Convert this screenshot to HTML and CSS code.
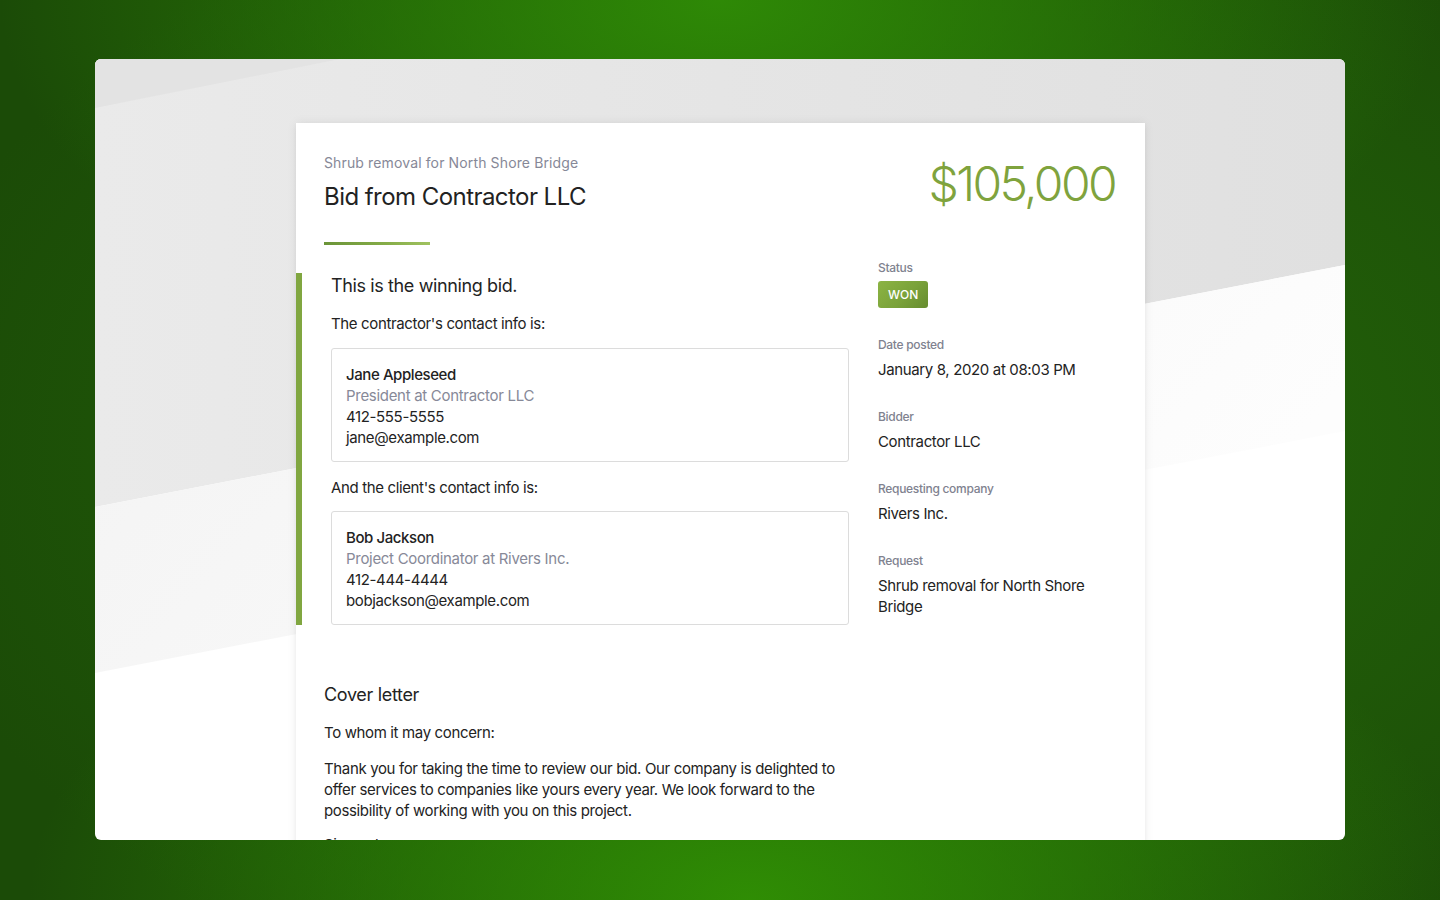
FILE: index.html
```html
<!DOCTYPE html>
<html lang="en">
<head>
<meta charset="utf-8">
<title>Bid from Contractor LLC</title>
<link rel="stylesheet" href="styles.css">
</head>
<body>
<div class="screen">
  <svg class="screen-bg" viewBox="0 0 1250 781" preserveAspectRatio="none" aria-hidden="true">
    <defs>
      <linearGradient id="bandA" x1="0" y1="0" x2="1" y2="0">
        <stop offset="0" stop-color="#eaeaea"/>
        <stop offset="1" stop-color="#e0e0e0"/>
      </linearGradient>
      <linearGradient id="bandB" x1="0" y1="0" x2="1" y2="0.3">
        <stop offset="0" stop-color="#f3f3f3"/>
        <stop offset="1" stop-color="#fdfdfd"/>
      </linearGradient>
    </defs>
    <rect x="0" y="0" width="1250" height="781" fill="#ffffff"/>
    <polygon points="0,0 1250,0 1250,206 0,448" fill="url(#bandA)"/>
    <polygon points="0,0 245,0 0,49" fill="#e3e3e3"/>
    <polygon points="0,448 1250,206 1250,372 0,614" fill="url(#bandB)"/>
  </svg>

  <main class="card">
    <header class="card-header">
      <div class="heading">
        <p class="subtitle">Shrub removal for North Shore Bridge</p>
        <h1 class="title">Bid from Contractor LLC</h1>
        <div class="accent-line"></div>
      </div>
      <div class="price">$105,000</div>
    </header>

    <div class="card-body">
      <section class="main-col">
        <div class="winner">
          <p class="winner-title">This is the winning bid.</p>
          <p class="para">The contractor's contact info is:</p>
          <div class="contact">
            <div class="contact-name">Jane Appleseed</div>
            <div class="contact-role">President at Contractor LLC</div>
            <div>412-555-5555</div>
            <div>jane@example.com</div>
          </div>
          <p class="para">And the client's contact info is:</p>
          <div class="contact last">
            <div class="contact-name">Bob Jackson</div>
            <div class="contact-role">Project Coordinator at Rivers Inc.</div>
            <div>412-444-4444</div>
            <div>bobjackson@example.com</div>
          </div>
        </div>

        <h2 class="section-title">Cover letter</h2>
        <p class="para">To whom it may concern:</p>
        <p class="para letter">Thank you for taking the time to review our bid. Our company is delighted to offer services to companies like yours every year. We look forward to the possibility of working with you on this project.</p>
        <p class="para">Sincerely,</p>
        <p class="para">Contractor LLC</p>
      </section>

      <aside class="side-col">
        <div class="field">
          <div class="label">Status</div>
          <span class="badge">WON</span>
        </div>
        <div class="field">
          <div class="label">Date posted</div>
          <div class="value">January 8, 2020 at 08:03 PM</div>
        </div>
        <div class="field">
          <div class="label">Bidder</div>
          <div class="value">Contractor LLC</div>
        </div>
        <div class="field">
          <div class="label">Requesting company</div>
          <div class="value">Rivers Inc.</div>
        </div>
        <div class="field">
          <div class="label">Request</div>
          <div class="value">Shrub removal for North Shore Bridge</div>
        </div>
      </aside>
    </div>
  </main>
</div>
</body>
</html>
```

FILE: styles.css
```css
* { box-sizing: border-box; }

html, body { height: 100%; }

body {
  margin: 0;
  padding: 59px 95px 0;
  overflow: hidden;
  font-family: Inter, "Noto Sans", "Liberation Sans", sans-serif;
  color: #232323;
  background:
    radial-gradient(ellipse 50% 42% at 50% 0%, rgba(47, 140, 6, 0.95), rgba(47, 140, 6, 0) 100%),
    radial-gradient(ellipse 50% 42% at 52% 100%, rgba(48, 144, 4, 0.95), rgba(48, 144, 4, 0) 100%),
    radial-gradient(ellipse 70% 70% at 62% 50%, #25690a, #1b4b07 100%);
  background-color: #1f5806;
}

.screen {
  position: relative;
  width: 1250px;
  height: 781px;
  border-radius: 6px;
  overflow: hidden;
  padding-top: 64px;
}

.screen-bg {
  position: absolute;
  left: 0;
  top: 0;
  width: 100%;
  height: 100%;
  display: block;
}

.card {
  position: relative;
  width: 849px;
  min-height: 760px;
  margin-left: 201px;
  background: #ffffff;
  box-shadow: 0 0 10px rgba(0, 0, 0, 0.07), 0 2px 4px rgba(0, 0, 0, 0.04);
  padding: 29px 30px 40px 28px;
  letter-spacing: -0.36px;
}

.card-header {
  display: flex;
  justify-content: space-between;
  align-items: flex-start;
}

.subtitle {
  margin: 0;
  padding-top: 1px;
  font-size: 14px;
  line-height: 20px;
  letter-spacing: 0.13px;
  color: #868897;
}

.title {
  margin: 8px 0 0;
  font-size: 24px;
  line-height: 32px;
  font-weight: 400;
  letter-spacing: -0.55px;
  color: #222222;
}

.accent-line {
  width: 106px;
  height: 3px;
  margin-top: 29px;
  background: linear-gradient(90deg, #6b9438 0%, #86ad48 60%, #a0c260 100%);
}

.price {
  margin-top: 4px;
  font-size: 48px;
  line-height: 56px;
  font-weight: 300;
  color: #7fa33d;
  letter-spacing: -2.6px;
}

.card-body {
  display: flex;
  gap: 29px;
  margin-top: 14px;
}

.main-col {
  width: 525px;
  flex: none;
}

.winner {
  margin: 14px 0 0 -28px;
  border-left: 6px solid #80a640;
  padding-left: 29px;
}

.winner-title {
  margin: 0 0 14px;
  font-size: 18px;
  line-height: 26px;
  letter-spacing: -0.38px;
}

.para {
  margin: 0 0 15px;
  font-size: 15px;
  line-height: 21px;
}

.para.letter { margin-bottom: 13px; }

.contact {
  border: 1px solid #dcdcdc;
  border-radius: 3px;
  padding: 15px 14px 13px;
  margin: -1px 0 15px;
  font-size: 15px;
  line-height: 21px;
}

.contact.last { margin: -2px 0 0; }

.contact-name { font-weight: 500; color: #222222; letter-spacing: -0.42px; }

.contact-role { color: #878998; letter-spacing: -0.3px; }

.section-title {
  margin: 57px 0 14px;
  font-size: 18px;
  line-height: 26px;
  font-weight: 400;
  letter-spacing: -0.33px;
}

.side-col {
  width: 237px;
  flex: none;
}

.field { margin-bottom: 28px; }

.label {
  font-size: 12px;
  line-height: 17px;
  font-weight: 500;
  color: #80828f;
  letter-spacing: -0.3px;
  margin-bottom: 6px;
}

.value {
  font-size: 15px;
  line-height: 21px;
  color: #232323;
}

.badge {
  display: inline-block;
  margin-top: -1px;
  padding: 5px 10px;
  font-size: 12px;
  line-height: 17px;
  font-weight: 500;
  letter-spacing: 0;
  color: #ffffff;
  border-radius: 3px;
  background: linear-gradient(135deg, #8cb444 0%, #7aa23a 55%, #668c2f 100%);
}
```
